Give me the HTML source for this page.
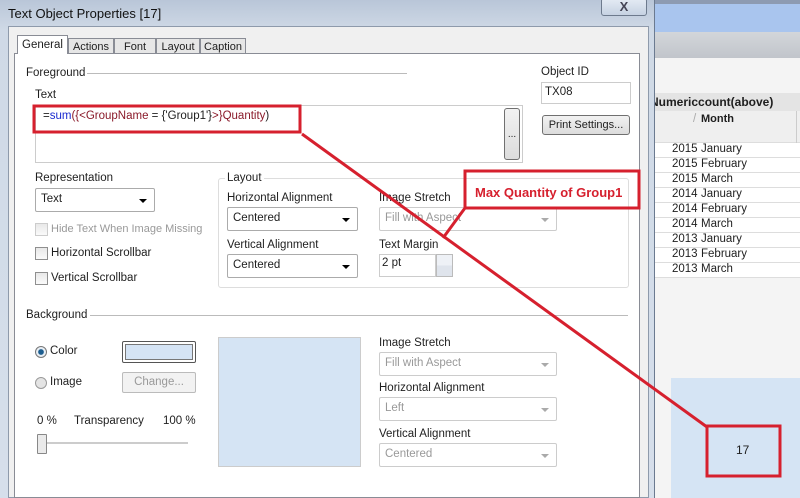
<!DOCTYPE html>
<html><head><style>
*{margin:0;padding:0;box-sizing:border-box}
body{width:800px;height:498px;overflow:hidden;position:relative;font-family:"Liberation Sans",sans-serif;font-size:11.5px;color:#1e1e1e;background:#f4f4f4}
.a{position:absolute;white-space:nowrap}
.dd{position:absolute;background:#fff;border:1px solid #ababab;border-radius:2px;padding:4px 5px;font-size:11.5px}
.dd:after{content:"";position:absolute;right:7px;top:10px;border:4px solid transparent;border-top:4px solid #000}
.dis{color:#999;border-color:#ccc}
.dis:after{border-top-color:#aaa}
.cb{position:absolute;width:13px;height:13px;border:1px solid #8f8f8f;background:linear-gradient(#e8e8e8,#fafafa)}
.btn{position:absolute;border:1px solid #707070;border-radius:3px;background:linear-gradient(#f2f2f2,#dcdcdc);text-align:center;white-space:nowrap}
.tab{position:absolute;top:38px;height:16px;background:#e6e6e6;border:1px solid #898c95;text-align:center;font-size:11px;padding-top:2px}
.row{position:absolute;left:655px;width:145px;height:15px;border-bottom:1px solid #ddd;font-size:11.5px;background:#fff}
</style></head><body>
<div class="a" style="left:650px;top:0;width:150px;height:4px;background:#8d9bb2"></div>
<div class="a" style="left:650px;top:4px;width:150px;height:28px;background:#a9c5ee"></div>
<div class="a" style="left:650px;top:32px;width:150px;height:26px;background:linear-gradient(#d3d6da,#c1c5cb)"></div>
<div class="a" style="left:650px;top:58px;width:150px;height:440px;background:#f4f4f4"></div>
<div class="a" style="left:650px;top:93px;width:150px;height:18px;background:#e4e4e4;font-weight:bold;font-size:12px;padding-left:0px;padding-top:2px;overflow:hidden">Numericcount(above)</div>
<div class="a" style="left:655px;top:111px;width:145px;height:32px;background:#efefef;border-bottom:1px solid #ddd"></div>
<div class="a" style="left:693px;top:113px;color:#aaa">/</div>
<div class="a" style="left:701px;top:113px;font-weight:bold;font-size:11px">Month</div>
<div class="a" style="left:796px;top:111px;width:1px;height:166px;background:#ccc"></div>
<div class="row" style="top:143px"><span class="a" style="left:17px">2015</span><span class="a" style="left:46px">January</span></div>
<div class="row" style="top:158px"><span class="a" style="left:17px">2015</span><span class="a" style="left:46px">February</span></div>
<div class="row" style="top:173px"><span class="a" style="left:17px">2015</span><span class="a" style="left:46px">March</span></div>
<div class="row" style="top:188px"><span class="a" style="left:17px">2014</span><span class="a" style="left:46px">January</span></div>
<div class="row" style="top:203px"><span class="a" style="left:17px">2014</span><span class="a" style="left:46px">February</span></div>
<div class="row" style="top:218px"><span class="a" style="left:17px">2014</span><span class="a" style="left:46px">March</span></div>
<div class="row" style="top:233px"><span class="a" style="left:17px">2013</span><span class="a" style="left:46px">January</span></div>
<div class="row" style="top:248px"><span class="a" style="left:17px">2013</span><span class="a" style="left:46px">February</span></div>
<div class="row" style="top:263px"><span class="a" style="left:17px">2013</span><span class="a" style="left:46px">March</span></div>
<div class="a" style="left:671px;top:378px;width:129px;height:120px;background:#d5e4f4"></div>
<div class="a" style="left:736px;top:443px;font-size:12px">17</div>

<div class="a" style="left:0;top:0;width:655px;height:498px;background:linear-gradient(#b9c6d8,#cfd9e6 30px,#d6dfeb);border-right:1px solid #6b7a90"></div>
<div class="a" style="left:8px;top:6px;font-size:13px;color:#111">Text Object Properties [17]</div>
<div class="btn" style="left:601px;top:-2px;width:46px;height:18px;border-color:#6d7a8d;background:linear-gradient(#e4ebf4,#c6d2e2);font-weight:bold;color:#445;font-size:13px">X</div>
<div class="a" style="left:8px;top:26px;width:641px;height:472px;background:#f0f0f0;border:1px solid #8e9aab"></div>
<div class="a" style="left:14px;top:53px;width:626px;height:445px;background:#fff;border:1px solid #898c95"></div>
<div class="a" style="left:17px;top:35px;width:51px;height:19px;background:#fff;border:1px solid #898c95;border-bottom:none;text-align:center;padding-top:3px;font-size:11.5px">General</div>
<div class="tab" style="left:68px;width:46px">Actions</div>
<div class="tab" style="left:114px;width:42px">Font</div>
<div class="tab" style="left:156px;width:44px">Layout</div>
<div class="tab" style="left:200px;width:46px">Caption</div>

<div class="a" style="left:26px;top:67px">Foreground</div>
<div class="a" style="left:87px;top:73px;width:320px;height:1px;background:#bbb"></div>
<div class="a" style="left:35px;top:89px">Text</div>
<div class="a" style="left:35px;top:105px;width:488px;height:58px;border:1px solid #ccc;background:#fff"></div>
<div class="a" style="left:43px;top:110px"><span>=</span><span style="color:#1a2ad0">sum</span><span style="color:#8a1a2a">({&lt;GroupName</span> = {'Group1'}<span style="color:#8a1a2a">&gt;}Quantity</span>)</div>
<div class="btn" style="left:504px;top:108px;width:16px;height:52px;padding-top:20px;font-size:10px">...</div>
<div class="a" style="left:541px;top:66px">Object ID</div>
<div class="a" style="left:541px;top:82px;width:90px;height:22px;border:1px solid #ccc;padding:3px">TX08</div>
<div class="btn" style="left:542px;top:115px;width:88px;height:20px;padding-top:3px;font-size:11px">Print Settings...</div>

<div class="a" style="left:35px;top:172px">Representation</div>
<div class="dd" style="left:35px;top:188px;width:120px;height:24px">Text</div>
<div class="cb" style="left:35px;top:223px;border-color:#ccc"></div><div class="a" style="left:51px;top:223px;color:#999;font-size:11px">Hide Text When Image Missing</div>
<div class="cb" style="left:35px;top:247px"></div><div class="a" style="left:51px;top:247px">Horizontal Scrollbar</div>
<div class="cb" style="left:35px;top:272px"></div><div class="a" style="left:51px;top:272px">Vertical Scrollbar</div>

<div class="a" style="left:218px;top:178px;width:411px;height:110px;border:1px solid #ddd;border-radius:3px"></div>
<div class="a" style="left:225px;top:172px;background:#fff;padding:0 2px">Layout</div>
<div class="a" style="left:227px;top:192px">Horizontal Alignment</div>
<div class="dd" style="left:227px;top:207px;width:131px;height:24px">Centered</div>
<div class="a" style="left:227px;top:239px">Vertical Alignment</div>
<div class="dd" style="left:227px;top:254px;width:131px;height:24px">Centered</div>
<div class="a" style="left:379px;top:192px">Image Stretch</div>
<div class="dd dis" style="left:379px;top:207px;width:178px;height:24px">Fill with Aspect</div>
<div class="a" style="left:379px;top:239px">Text Margin</div>
<div class="a" style="left:379px;top:254px;width:57px;height:23px;border:1px solid #ccc;padding:2px">2 pt</div>
<div class="a" style="left:436px;top:254px;width:17px;height:23px;border:1px solid #bbb;background:linear-gradient(#eef1f6 50%,#dfe4ec 50%)"></div>

<div class="a" style="left:26px;top:309px">Background</div>
<div class="a" style="left:90px;top:315px;width:538px;height:1px;background:#bbb"></div>
<div class="a" style="left:35px;top:346px;width:12px;height:12px;border-radius:50%;border:1px solid #777;background:radial-gradient(#1c5d8f 35%,#e8eef4 45%)"></div>
<div class="a" style="left:50px;top:345px">Color</div>
<div class="a" style="left:122px;top:341px;width:74px;height:22px;border:1px solid #555;border-radius:2px;background:#fff;padding:2px"><div style="width:100%;height:100%;background:#d5e4f5;border:1px solid #777"></div></div>
<div class="a" style="left:35px;top:377px;width:12px;height:12px;border-radius:50%;border:1px solid #999;background:#e4e4e4"></div>
<div class="a" style="left:50px;top:376px">Image</div>
<div class="a" style="left:122px;top:372px;width:74px;height:21px;border:1px solid #bbb;border-radius:2px;background:#f2f2f2;color:#999;text-align:center;padding-top:3px">Change...</div>
<div class="a" style="left:37px;top:415px">0 %</div>
<div class="a" style="left:74px;top:415px">Transparency</div>
<div class="a" style="left:163px;top:415px">100 %</div>
<div class="a" style="left:38px;top:442px;width:150px;height:2px;background:#ccc"></div>
<div class="a" style="left:37px;top:434px;width:10px;height:20px;border:1px solid #888;background:#eaeaea;border-radius:1px"></div>
<div class="a" style="left:218px;top:337px;width:143px;height:130px;background:#d5e4f4;border:1px solid #ccc"></div>
<div class="a" style="left:379px;top:337px">Image Stretch</div>
<div class="dd dis" style="left:379px;top:352px;width:178px;height:24px">Fill with Aspect</div>
<div class="a" style="left:379px;top:382px">Horizontal Alignment</div>
<div class="dd dis" style="left:379px;top:397px;width:178px;height:24px">Left</div>
<div class="a" style="left:379px;top:428px">Vertical Alignment</div>
<div class="dd dis" style="left:379px;top:443px;width:178px;height:24px">Centered</div>

<svg class="a" style="left:0;top:0" width="800" height="498">
<g fill="none" stroke="#d6202e" stroke-width="3">
<rect x="34" y="106" width="266" height="26"/>
<rect x="465" y="171" width="174" height="37"/>
<rect x="707" y="426" width="73" height="50"/>
<line x1="302" y1="134" x2="707" y2="427"/>
<line x1="465" y1="208" x2="443" y2="238"/>
</g>
<text x="475" y="197" fill="#d6202e" font-family="Liberation Sans" font-weight="bold" font-size="13">Max Quantity of Group1</text>
</svg>
</body></html>
